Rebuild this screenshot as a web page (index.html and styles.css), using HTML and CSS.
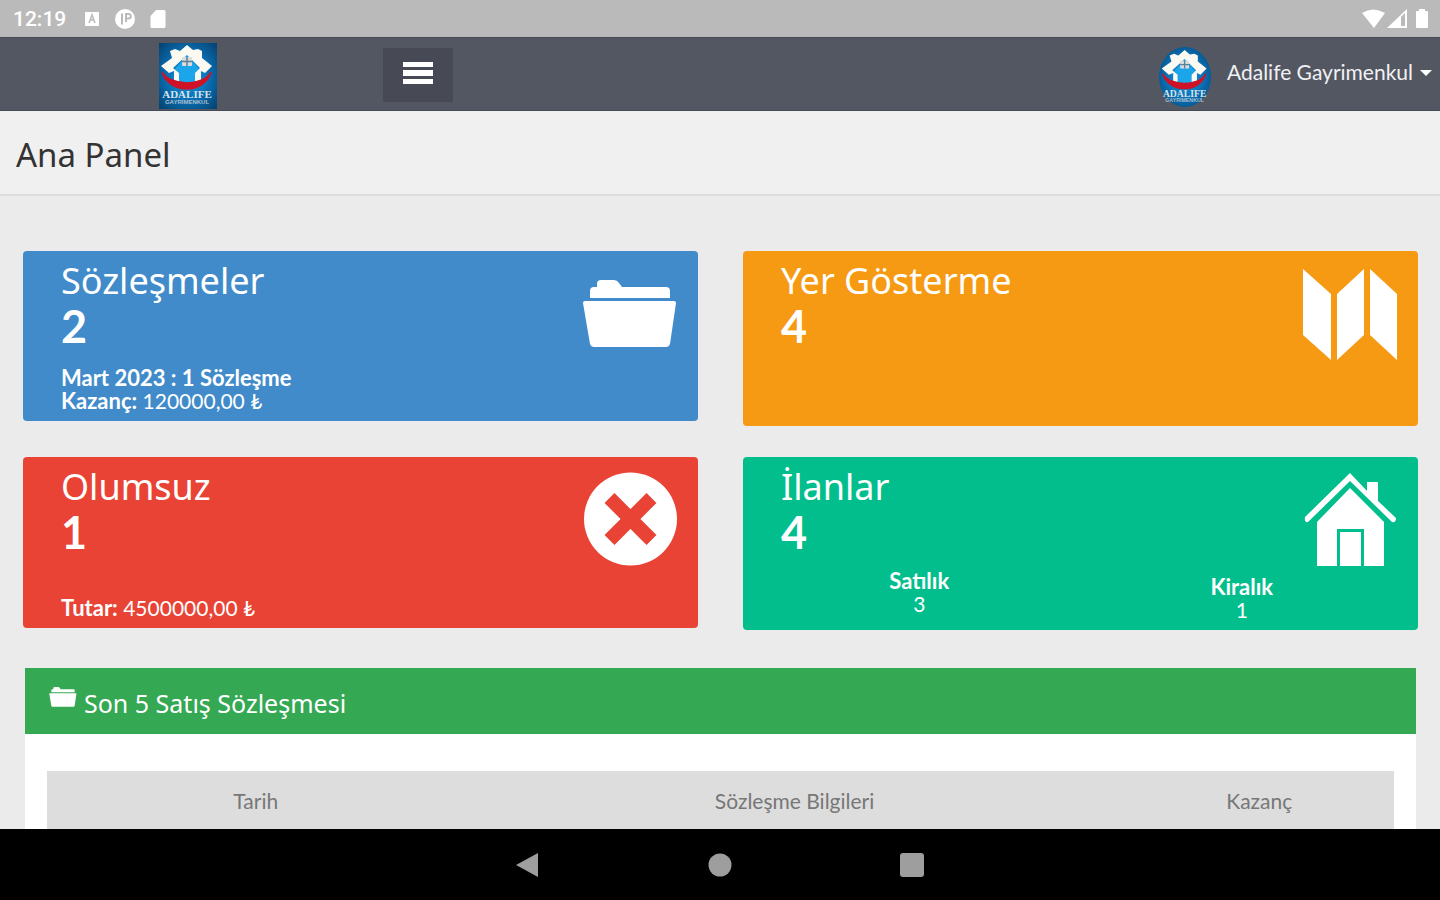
FILE: index.html
```html
<!DOCTYPE html>
<html lang="tr">
<head>
<meta charset="utf-8">
<meta name="viewport" content="width=device-width, initial-scale=1">
<title>Ana Panel</title>
<link rel="stylesheet" href="styles.css">
</head>
<body>
<svg class="defs" aria-hidden="true">
  <defs>
    <radialGradient id="logo-bg" cx="50%" cy="50%" r="70%">
      <stop offset="0" stop-color="#1b9be0"/>
      <stop offset="0.5" stop-color="#0a70b4"/>
      <stop offset="1" stop-color="#05406f"/>
    </radialGradient>
    <symbol id="logo-house" viewBox="0 0 58 64">
      <path d="M16 26 28 12 40 26V42H16z" fill="#1ba6ec"/>
      <path d="M28 2 34 7 39 6 43 8 43 15 53 23 46 30 42 28V38H36V30L41 25 28 12 14 25 20 30V38H15V28L10 30 2 23 13 15 11 8 16 6 21 8z" fill="#fbfaf2"/>
      <rect x="23" y="14" width="10" height="9" rx="1" fill="#d8dcdc"/>
      <path d="M28 14v9M23 18.500h10" stroke="#5b7f98" stroke-width="1.500"/>
      <path d="M3 29C10 51 45 52 52 29 44 44 11 43 3 29z" fill="#cf1226" stroke="#cf1226" stroke-width="1.500"/>
      <text class="logo-name" x="28" y="55" text-anchor="middle">ADALIFE</text>
      <text class="logo-sub" x="28" y="61" text-anchor="middle">GAYRİMENKUL</text>
    </symbol>
    <symbol id="folder" viewBox="0 0 96 96">
      <path d="M8 32V25Q8 21 12 21H15V18Q15 14 19 14H32Q35 14 37 17L40 21H84Q88 21 88 25V32z"/>
      <path d="M1 37Q1 35 3 35H92Q94 35 94 37L88 78Q87 81 84 81H12Q9 81 8 78z"/>
    </symbol>
  </defs>
</svg>

<div class="status-bar">
  <span class="clock">12:19</span>
  <svg class="status-icon" viewBox="0 0 20 20"><rect x="3" y="3" width="14" height="14" rx="1" fill="#fff"/><path d="M7 14 10 6 13 14M8 11h4" fill="none" stroke="#bababa" stroke-width="1.500"/></svg>
  <svg class="status-icon" viewBox="0 0 20 20"><circle cx="10" cy="10" r="10" fill="#fff"/><path d="M7 4.500v11M11 13V5h2.500a2 2 0 0 1 0 4.500H11" fill="none" stroke="#bababa" stroke-width="2"/></svg>
  <svg class="status-icon" viewBox="0 0 20 20"><path d="M8 1h8q1.500 0 1.500 1.500v15q0 1.500-1.500 1.500H4q-1.500 0-1.500-1.500V7z" fill="#fff"/></svg>
  <svg class="signals" viewBox="0 0 70 20"><path d="M0 4Q11-3 23 4L12 19z" fill="#fff"/><path d="M25 19 45 0V19z" fill="#fff"/><path d="M39 8v9h4V4z" fill="#bababa"/><path d="M54 3q0-1 1-1h2V0h6v2h2q1 0 1 1v15q0 1-1 1H55q-1 0-1-1z" fill="#fff"/></svg>
</div>

<header class="top-bar">
  <a class="brand" href="#" aria-label="Adalife">
    <svg viewBox="0 0 58 66"><rect width="58" height="66" fill="url(#logo-bg)"/><use href="#logo-house" width="58" height="64"/></svg>
  </a>
  <button class="menu-button" type="button" aria-label="Menü">
    <svg viewBox="0 0 30 22"><path d="M0 0h30v5H0zM0 8h30v6H0zM0 17h30v5H0z" fill="#fff"/></svg>
  </button>
  <button class="user-menu" type="button">
    <svg class="avatar" viewBox="0 0 52 60"><ellipse cx="26" cy="30" rx="26" ry="30" fill="url(#logo-bg)"/><use href="#logo-house" x="1" width="51" height="59"/></svg>
    <span>Adalife Gayrimenkul</span>
    <span class="caret"></span>
  </button>
</header>

<main class="page">
  <div class="page-title"><h1>Ana Panel</h1></div>

  <section class="cards">
    <article class="card blue">
      <h2>Sözleşmeler</h2>
      <p class="count">2</p>
      <p class="details"><b>Mart 2023 : 1 Sözleşme</b><br><b>Kazanç:</b> 120000,00 ₺</p>
      <svg class="card-icon"><use href="#folder"/></svg>
    </article>
    <article class="card orange">
      <h2>Yer Gösterme</h2>
      <p class="count">4</p>
      <svg class="card-icon" viewBox="0 0 96 96"><path d="M1 3 29 28V94L1 69zM35 28 62 3V69L35 94zM68 3 95 28V94L68 69z"/></svg>
    </article>
    <article class="card red">
      <h2>Olumsuz</h2>
      <p class="count">1</p>
      <p class="details"><b>Tutar:</b> 4500000,00 ₺</p>
      <svg class="card-icon" viewBox="0 0 96 96"><circle cx="48.500" cy="47" r="46.500"/><path class="cross" d="M27.500 26 69.500 68M69.500 26 27.500 68"/></svg>
    </article>
    <article class="card green">
      <h2>İlanlar</h2>
      <p class="count">4</p>
      <div class="split">
        <p><b>Satılık</b><br>3</p>
        <p class="lower"><b>Kiralık</b><br>1</p>
      </div>
      <svg class="card-icon" viewBox="0 0 96 96"><path d="M48 1 65 19V10H76V29L94 46Q94 51 90 50L48 9 6 50Q2 51 3 45z"/><path d="M48 16 82 50V94H15V50z"/><path class="door" d="M36.500 94V58.500H60.500V94"/></svg>
    </article>
  </section>

  <section class="panel">
    <h2 class="panel-title"><svg><use href="#folder"/></svg>Son 5 Satış Sözleşmesi</h2>
    <div class="panel-body">
      <table>
        <thead>
          <tr><th class="col-date">Tarih</th><th>Sözleşme Bilgileri</th><th class="col-gain">Kazanç</th></tr>
        </thead>
      </table>
    </div>
  </section>
</main>

<nav class="nav-bar">
  <button type="button" aria-label="Geri"><svg viewBox="0 0 26 26"><path d="M1 13 23 1V25z"/></svg></button>
  <button type="button" aria-label="Ana ekran"><svg viewBox="0 0 26 26"><circle cx="13" cy="13" r="11.500"/></svg></button>
  <button type="button" aria-label="Son uygulamalar"><svg viewBox="0 0 26 26"><rect x="1" y="1" width="24" height="24" rx="3"/></svg></button>
</nav>
</body>
</html>
```
FILE: styles.css
```css
* { box-sizing: border-box; }

body {
  margin: 0;
  height: 100vh;
  display: flex;
  flex-direction: column;
  overflow: hidden;
  background: #ebebeb;
  font-family: Lato, "Noto Sans", sans-serif;
  font-size: 21px;
  line-height: 23px;
  color: #fff;
}

h1, h2, p { margin: 0; font-weight: 400; }

button {
  border: 0;
  padding: 0;
  background: none;
  color: inherit;
  font: inherit;
}

svg { display: block; }
.defs { position: absolute; width: 0; height: 0; }

.logo-name { font: bold 11px "Liberation Serif", serif; fill: #d5e4ee; }
.logo-sub { font: bold 6px "Liberation Sans", sans-serif; fill: #a9bfce; }

.status-bar {
  flex: none;
  height: 37px;
  display: flex;
  align-items: center;
  gap: 13px;
  padding: 0 8px 0 13px;
  background: #bababa;
}
.clock { font: 500 21px/24px Roboto, sans-serif; }
.status-icon { width: 20px; height: 20px; }
.status-icon:first-of-type { margin-left: 3px; }
.signals { width: 70px; height: 20px; margin-left: auto; }

.top-bar {
  flex: none;
  height: 74px;
  display: flex;
  align-items: center;
  padding: 2px 8px 0 0;
  background: #535762;
  border-top: 1px solid #454a58;
  border-bottom: 1px solid #454a58;
}
.brand { width: 383px; padding: 2px 0 0 159px; }
.brand svg { width: 58px; height: 66px; }
.menu-button {
  width: 70px;
  height: 54px;
  display: grid;
  place-items: center;
  background: #474a54;
}
.menu-button svg { width: 30px; height: 22px; margin-bottom: 4px; }
.user-menu {
  margin-left: auto;
  display: flex;
  align-items: center;
  color: #f1f1f3;
}
.user-menu span { margin-bottom: 8px; }
.avatar { width: 52px; height: 60px; margin: 4px 16px 0 0; }
.user-menu .caret {
  margin: 0 0 4px 7px;
  border: 6px solid transparent;
  border-top-color: #fff;
  border-bottom: 0;
}

.page { flex: 1; min-height: 0; overflow: hidden; }

.page-title {
  height: 85px;
  padding: 20px 16px;
  background: #f0f0f0;
  border-bottom: 2px solid #dcdcdc;
}
.page-title h1 { font: 33px/48px "Noto Sans", sans-serif; color: #333; }

.cards {
  display: grid;
  grid-template-columns: 1fr 1fr;
  align-items: start;
  gap: 31px 45px;
  padding: 55px 22px 0 23px;
}
.card {
  position: relative;
  padding: 10px 15px 9px 38px;
  border-radius: 4px;
}
.blue { background: #418bca; }
.orange { background: #f69a13; min-height: 175px; }
.red { background: #e94335; }
.green { background: #02be8d; }
.card h2 { font: 36px/40px "Noto Sans", sans-serif; }
.count { margin-top: 3px; font-size: 45px; line-height: 45px; font-weight: 700; }
.card b { font-size: 22px; }
.details { margin-top: 17px; }
.red .details { margin-top: 41px; }
.split {
  display: grid;
  grid-template-columns: 1fr 1fr;
  margin: 14px 0 0 -23px;
  text-align: center;
}
.lower { padding-top: 6px; }
.card-icon {
  position: absolute;
  top: 15px;
  right: 20px;
  width: 96px;
  height: 96px;
  fill: #fff;
}
.cross { stroke: #e94335; stroke-width: 14px; }
.door { fill: none; stroke: #02be8d; stroke-width: 3px; }

.panel { margin: 38px 24px 0 25px; background: #fff; }
.panel-title {
  display: flex;
  align-items: center;
  gap: 7px;
  height: 66px;
  padding: 4px 24px 0;
  background: #34a853;
  font: 25px/36px "Noto Sans", sans-serif;
}
.panel-title svg { width: 28px; height: 28px; margin-bottom: 12px; fill: #fff; }
.panel-body { padding: 37px 22px; }
table { width: 100%; table-layout: fixed; border-collapse: collapse; }
th {
  padding: 18px 0;
  background: #ddd;
  color: #777;
  font-weight: 400;
}
.col-date { width: 31%; }
.col-gain { width: 20%; }

.nav-bar {
  flex: none;
  height: 71px;
  display: flex;
  justify-content: center;
  align-items: center;
  gap: 166px;
  background: #000;
}
.nav-bar svg { width: 26px; height: 26px; fill: #9e9e9e; }
```
